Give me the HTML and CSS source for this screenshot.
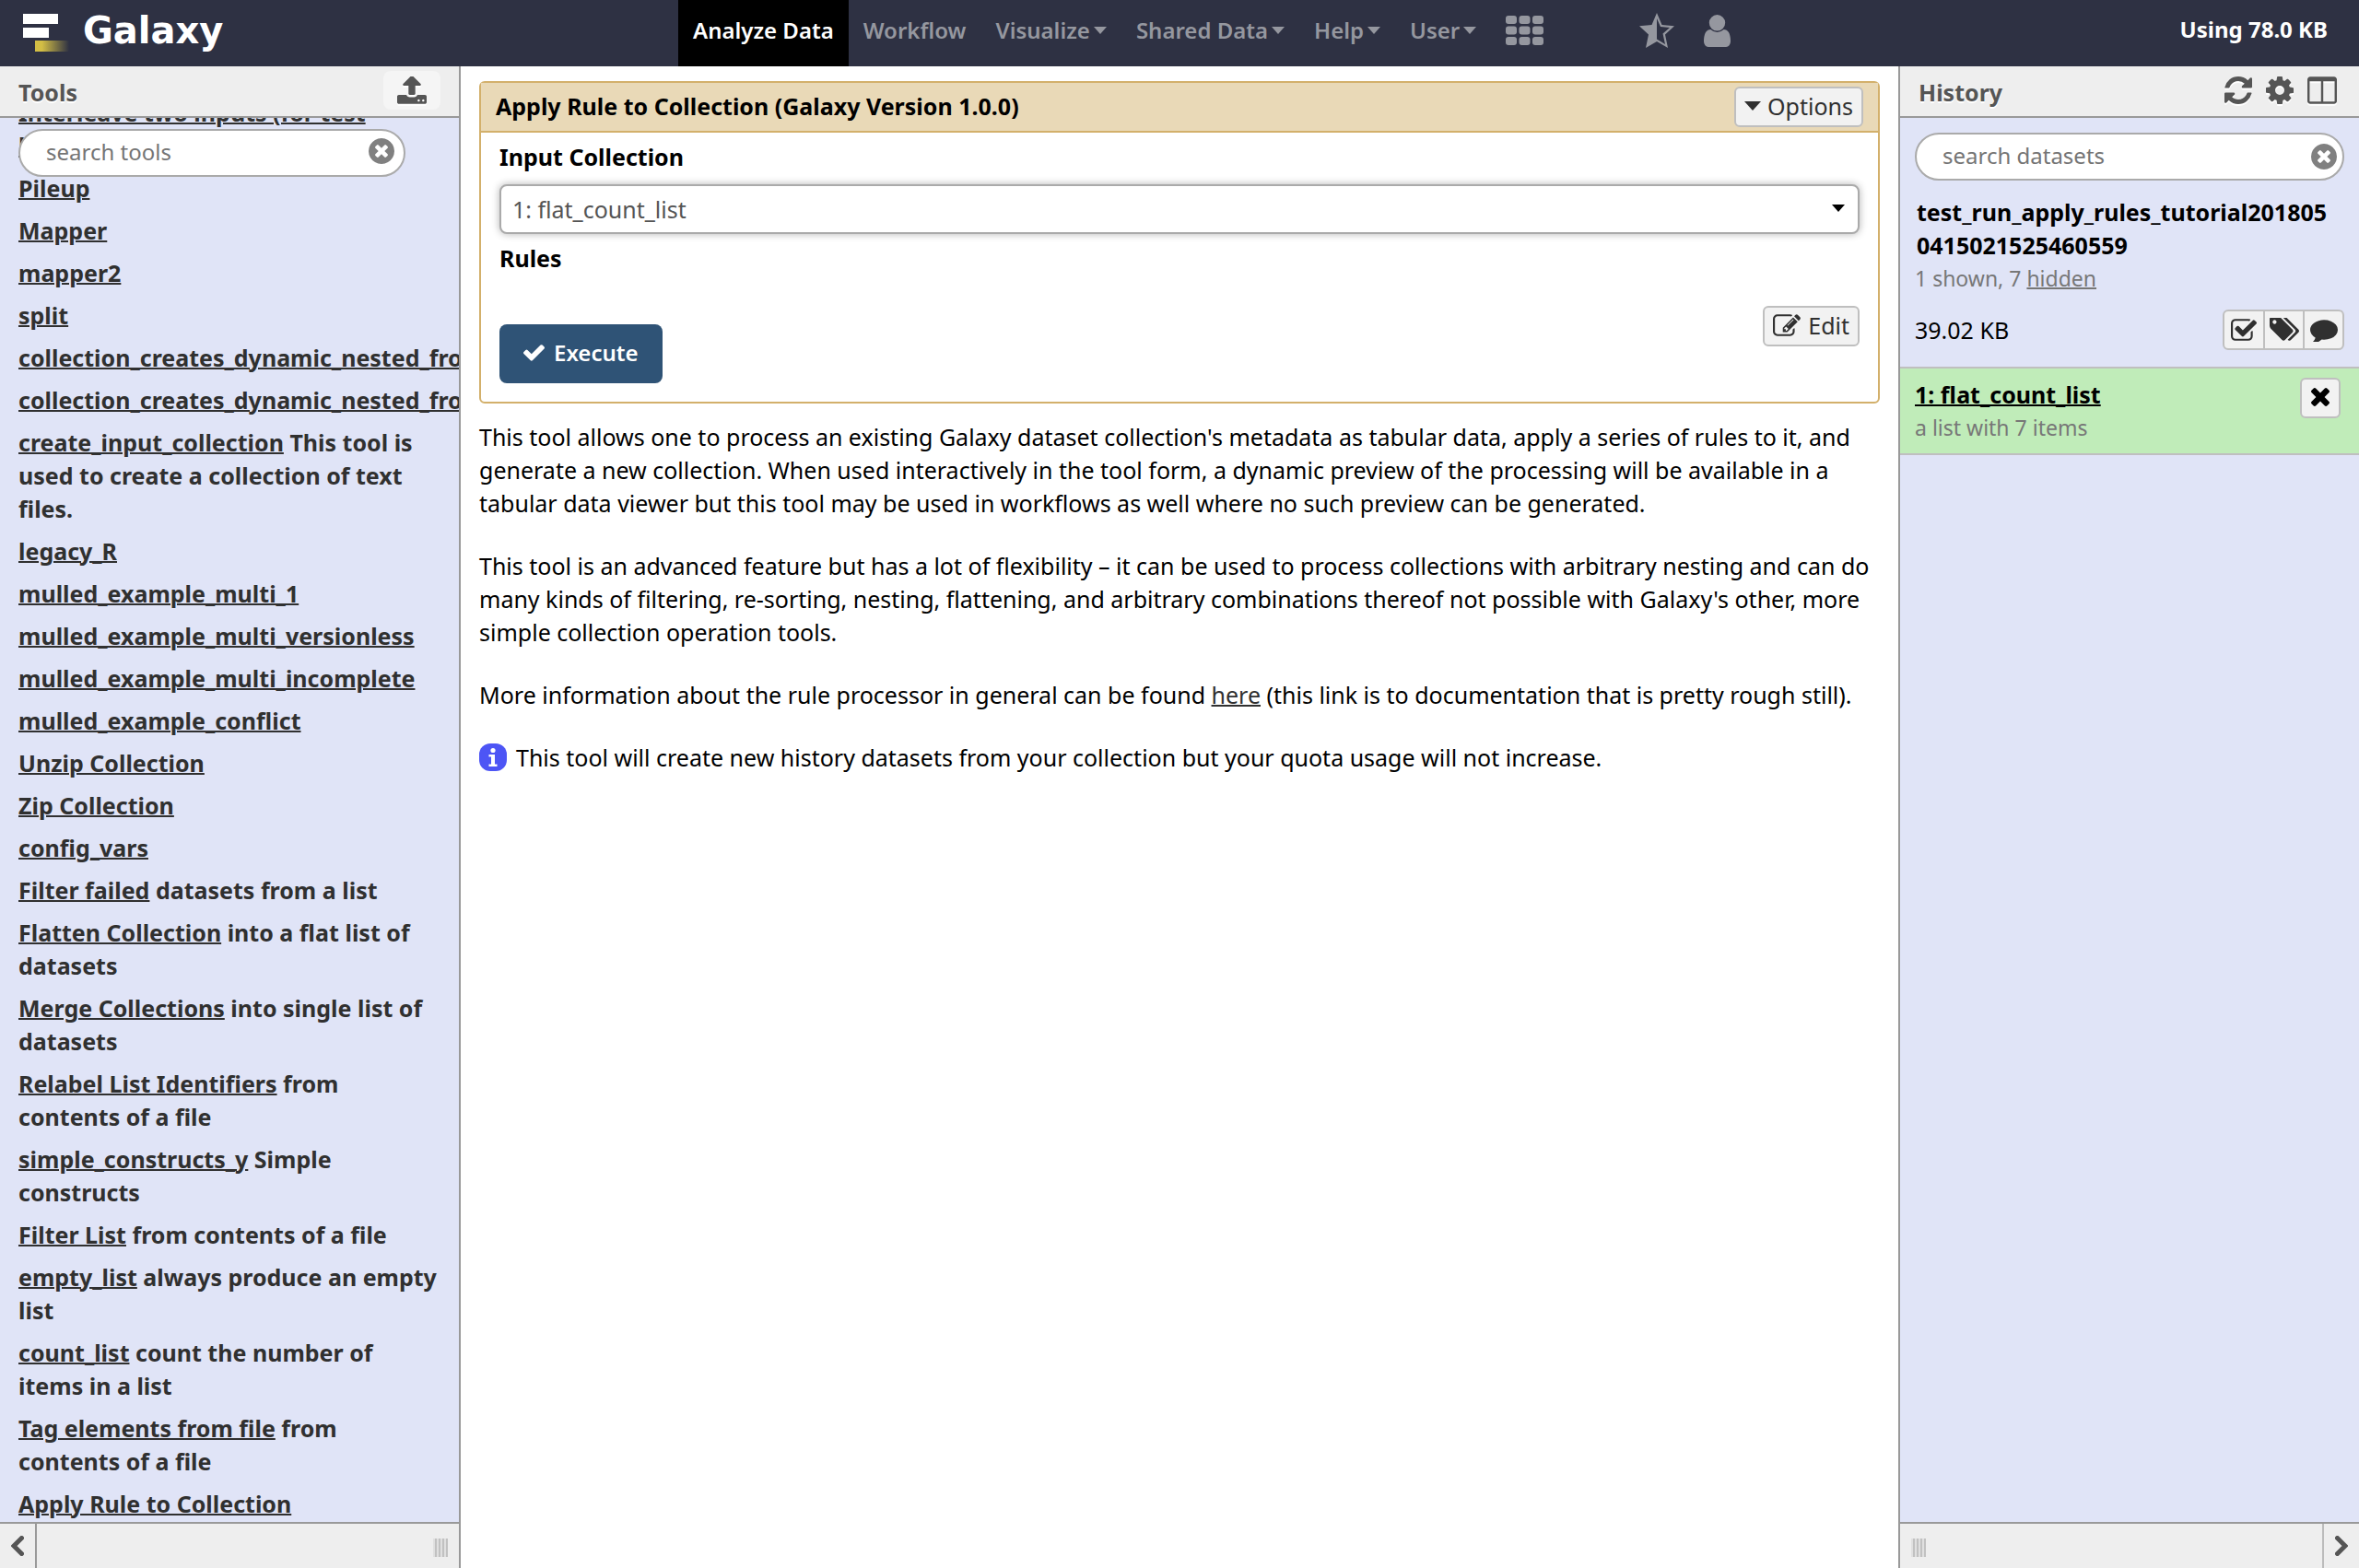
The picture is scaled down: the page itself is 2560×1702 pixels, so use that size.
FILE: index.html
```html
<!DOCTYPE html>
<html lang="en">
<head>
<meta charset="utf-8">
<title>Galaxy</title>
<link rel="stylesheet" href="styles.css">
</head>
<body>
<svg class="defs" aria-hidden="true">
  <symbol id="times-circle" viewBox="128 128 1536 1536"><path d="M1277 1122q0-26-19-45l-181-181 181-181q19-19 19-45 0-27-19-46l-90-90q-19-19-46-19-26 0-45 19l-181 181-181-181q-19-19-45-19-27 0-46 19l-90 90q-19 19-19 46 0 26 19 45l181 181-181 181q-19 19-19 45 0 27 19 46l90 90q19 19 46 19 26 0 45-19l181-181 181 181q19 19 45 19 27 0 46-19l90-90q19-19 19-46zm387-226q0 209-103 385.500t-279.500 279.500-385.500 103-385.500-103-279.500-279.500-103-385.500 103-385.500 279.500-279.500 385.500-103 385.500 103 279.500 279.500 103 385.500z"/></symbol>
</svg>
<div class="app">
  <header class="masthead">
    <a class="brand" href="#">
      <svg class="logo" viewBox="0 0 52 44" width="52" height="44">
        <defs><linearGradient id="fade"><stop offset="0.2" stop-color="#d3be45"/><stop offset="1" stop-color="#d3be45" stop-opacity="0"/></linearGradient></defs>
        <rect x="1" y="1" width="38" height="11" fill="#fff"/>
        <rect x="1" y="16" width="28" height="11" fill="#fff"/>
        <rect x="14" y="30" width="37" height="12" fill="url(#fade)"/>
      </svg>
      <span class="brand-name">Galaxy</span>
    </a>
    <nav class="menu">
      <a class="menu-item active" href="#">Analyze Data</a>
      <a class="menu-item" href="#">Workflow</a>
      <a class="menu-item has-caret" href="#">Visualize</a>
      <a class="menu-item has-caret" href="#">Shared Data</a>
      <a class="menu-item has-caret" href="#">Help</a>
      <a class="menu-item has-caret" href="#">User</a>
      <a class="menu-item" href="#" aria-label="Apps">
        <svg viewBox="0 0 41 32" width="41" height="32"><rect width="12" height="9" rx="3"/><rect x="14.500" width="12" height="9" rx="3"/><rect x="29" width="12" height="9" rx="3"/><rect y="11.500" width="12" height="9" rx="3"/><rect x="14.500" y="11.500" width="12" height="9" rx="3"/><rect x="29" y="11.500" width="12" height="9" rx="3"/><rect y="23" width="12" height="9" rx="3"/><rect x="14.500" y="23" width="12" height="9" rx="3"/><rect x="29" y="23" width="12" height="9" rx="3"/></svg>
      </a>
      <a class="menu-item shortcuts" href="#" aria-label="Favorites">
        <svg viewBox="0 0 38 38" width="38" height="38"><path d="M19 0L24.500 13 38 14.300 28 23.500 31 38 19 31 7 38 10 23.500 0 14.300 13.500 13zM19 6V28.500L28 34 25.500 22.500 33 16 23 15z" fill-rule="evenodd"/></svg>
      </a>
      <a class="menu-item" href="#" aria-label="Account">
        <svg viewBox="256 128 1280 1536" width="29" height="35"><path d="M1536 1399q0 109-62.500 187t-150.500 78h-854q-88 0-150.500-78t-62.500-187q0-85 8.500-160.500t31.500-152 58.500-131 94-89 134.500-34.500q131 128 313 128t313-128q76 0 134.500 34.500t94 89 58.500 131 31.500 152 8.500 160.500zm-256-887q0 159-112.500 271.500t-271.500 112.500-271.500-112.500-112.500-271.500 112.500-271.500 271.500-112.500 271.500 112.500 112.500 271.500z"/></svg>
      </a>
    </nav>
    <div class="quota">Using 78.0 KB</div>
  </header>

  <aside class="panel panel-left">
    <div class="panel-header">
      <h2>Tools</h2>
      <button class="upload" aria-label="Upload">
        <svg viewBox="64 128 1664 1536" width="32" height="30"><path d="M1344 1472q0-26-19-45t-45-19-45 19-19 45 19 45 45 19 45-19 19-45zm256 0q0-26-19-45t-45-19-45 19-19 45 19 45 45 19 45-19 19-45zm128-224v320q0 40-28 68t-68 28h-1472q-40 0-68-28t-28-68v-320q0-40 28-68t68-28h427q21 56 70.500 92t110.500 36h256q61 0 110.500-36t70.500-92h427q40 0 68 28t28 68zm-325-648q-17 40-59 40h-256v448q0 26-19 45t-45 19h-256q-26 0-45-19t-19-45v-448h-256q-42 0-59-40-17-39 14-69l448-448q18-19 45-19t45 19l448 448q31 30 14 69z"/></svg>
      </button>
    </div>
    <div class="tools">
      <ul class="tool-list">
        <li><a href="#">Interleave two inputs (for test libraries)</a></li>
        <li><a href="#">Pileup</a></li>
        <li><a href="#">Mapper</a></li>
        <li><a href="#">mapper2</a></li>
        <li><a href="#">split</a></li>
        <li><a href="#">collection_creates_dynamic_nested_from</a></li>
        <li><a href="#">collection_creates_dynamic_nested_from</a></li>
        <li><a href="#">create_input_collection</a> This tool is used to create a collection of text files.</li>
        <li><a href="#">legacy_R</a></li>
        <li><a href="#">mulled_example_multi_1</a></li>
        <li><a href="#">mulled_example_multi_versionless</a></li>
        <li><a href="#">mulled_example_multi_incomplete</a></li>
        <li><a href="#">mulled_example_conflict</a></li>
        <li><a href="#">Unzip Collection</a></li>
        <li><a href="#">Zip Collection</a></li>
        <li><a href="#">config_vars</a></li>
        <li><a href="#">Filter failed</a> datasets from a list</li>
        <li><a href="#">Flatten Collection</a> into a flat list of datasets</li>
        <li><a href="#">Merge Collections</a> into single list of datasets</li>
        <li><a href="#">Relabel List Identifiers</a> from contents of a file</li>
        <li><a href="#">simple_constructs_y</a> Simple constructs</li>
        <li><a href="#">Filter List</a> from contents of a file</li>
        <li><a href="#">empty_list</a> always produce an empty list</li>
        <li><a href="#">count_list</a> count the number of items in a list</li>
        <li><a href="#">Tag elements from file</a> from contents of a file</li>
        <li><a href="#">Apply Rule to Collection</a></li>
      </ul>
      <div class="search tool-search">
        <input type="text" placeholder="search tools" aria-label="search tools">
        <button class="clear" aria-label="Clear search"><svg width="28" height="28"><use href="#times-circle"/></svg></button>
      </div>
    </div>
    <div class="panel-footer">
      <button class="collapse" aria-label="Collapse tools"><svg viewBox="0 0 14 22" width="14" height="22"><path d="M11.500 2.500L3 11l8.500 8.500" /></svg></button>
      <span class="grip"></span>
    </div>
  </aside>

  <main class="center">
    <section class="card">
      <div class="card-header">
        <h1>Apply Rule to Collection (Galaxy Version 1.0.0)</h1>
        <button class="btn options"><svg viewBox="0 0 18 10" width="18" height="10"><path d="M0 0H18L9 10z"/></svg>Options</button>
      </div>
      <div class="card-body">
        <label class="field-label" for="input-collection">Input Collection</label>
        <div class="select-wrap">
          <select id="input-collection"><option>1: flat_count_list</option></select>
          <svg class="select-caret" viewBox="0 0 14 8" width="14" height="8"><path d="M0 0H14L7 8z"/></svg>
        </div>
        <div class="field-label rules-label">Rules</div>
        <div class="actions">
          <button class="execute"><svg viewBox="121 338 1550 1188" width="23" height="18"><path d="M1671 566q0 40-28 68l-724 724-136 136q-28 28-68 28t-68-28l-136-136-362-362q-28-28-28-68t28-68l136-136q28-28 68-28t68 28l294 295 656-657q28-28 68-28t68 28l136 136q28 28 28 68z"/></svg>Execute</button>
          <button class="btn edit"><svg viewBox="0 128 1792 1408" width="30" height="24"><path d="M888 1184l116-116-152-152-116 116v56h96v96h56zm440-720q-16-16-33 1l-350 350q-17 17-1 33t33-1l350-350q17-17 1-33zm80 594v190q0 119-84.500 203.500t-203.500 84.500h-832q-119 0-203.500-84.500t-84.500-203.500v-832q0-119 84.500-203.500t203.500-84.500h832q63 0 117 25 15 7 18 23 3 17-9 29l-49 49q-14 14-32 8-23-6-45-6h-832q-66 0-113 47t-47 113v832q0 66 47 113t113 47h832q66 0 113-47t47-113v-126q0-13 9-22l64-64q15-15 35-7t20 29zm-96-738l288 288-672 672h-288v-288zm444 132l-92 92-288-288 92-92q28-28 68-28t68 28l152 152q28 28 28 68t-28 68z"/></svg>Edit</button>
        </div>
      </div>
    </section>
    <div class="help">
      <p>This tool allows one to process an existing Galaxy dataset collection's metadata as tabular data, apply a series of rules to it, and generate a new collection. When used interactively in the tool form, a dynamic preview of the processing will be available in a tabular data viewer but this tool may be used in workflows as well where no such preview can be generated.</p>
      <p>This tool is an advanced feature but has a lot of flexibility – it can be used to process collections with arbitrary nesting and can do many kinds of filtering, re-sorting, nesting, flattening, and arbitrary combinations thereof not possible with Galaxy's other, more simple collection operation tools.</p>
      <p>More information about the rule processor in general can be found <a href="#">here</a> (this link is to documentation that is pretty rough still).</p>
      <p class="note"><svg viewBox="0 0 30 30" width="30" height="30"><rect width="30" height="30" rx="12" fill="#4d55f5"/><circle cx="15" cy="7.500" r="2.600" fill="#fff"/><path d="M10.500 12H17V22.500H19.500V25H10.500V22.500H13V14.500H10.500z" fill="#fff"/></svg>This tool will create new history datasets from your collection but your quota usage will not increase.</p>
    </div>
  </main>

  <aside class="panel panel-right">
    <div class="panel-header">
      <h2>History</h2>
      <div class="header-icons">
        <a href="#" aria-label="Refresh"><svg viewBox="128 128 1536 1536" width="30" height="30"><path d="M1639 1056q0 5-1 7-64 268-268 434.500t-478 166.500q-146 0-282.500-55t-243.500-157l-129 129q-19 19-45 19t-45-19-19-45v-448q0-26 19-45t45-19h448q26 0 45 19t19 45-19 45l-137 137q71 66 161 102t187 36q134 0 250-65t186-179q11-17 53-117 8-23 30-23h192q13 0 22.500 9.500t9.500 22.500zm25-800v448q0 26-19 45t-45 19h-448q-26 0-45-19t-19-45 19-45l138-138q-148-137-349-137-134 0-250 65t-186 179q-11 17-53 117-8 23-30 23h-199q-13 0-22.500-9.500t-9.500-22.500v-7q65-268 270-434.500t480-166.500q146 0 284 55.500t245 156.500l130-129q19-19 45-19t45 19 19 45z"/></svg></a>
        <a href="#" aria-label="History options"><svg viewBox="128 128 1536 1536" width="30" height="30"><path d="M1152 896q0-106-75-181t-181-75-181 75-75 181 75 181 181 75 181-75 75-181zm512-109v222q0 12-8 23t-20 13l-185 28q-19 54-39 91 35 50 107 138 10 12 10 25t-9 23q-27 37-99 108t-94 71q-12 0-26-9l-138-108q-44 23-91 38-16 136-29 186-7 28-36 28h-222q-14 0-24.500-8.500t-11.500-21.500l-28-184q-49-16-90-37l-141 107q-10 9-25 9-14 0-25-11-126-114-165-168-7-10-7-23 0-12 8-23 15-21 51-66.500t54-70.500q-27-50-41-99l-183-27q-13-2-21-12.500t-8-23.500v-222q0-12 8-23t19-13l186-28q14-46 39-92-40-57-107-138-10-12-10-24 0-10 9-23 26-36 98.500-107.500t94.500-71.500q13 0 26 10l138 107q44-23 91-38 16-136 29-186 7-28 36-28h222q14 0 24.500 8.500t11.500 21.500l28 184q49 16 90 37l142-107q9-9 24-9 13 0 25 10 129 119 165 170 7 8 7 22 0 12-8 23-15 21-51 66.500t-54 70.500q26 50 41 98l183 28q13 2 21 12.500t8 23.500z"/></svg></a>
        <a href="#" aria-label="View all histories"><svg viewBox="64 128 1664 1536" width="32" height="30"><path d="M224 1536h608v-1152h-640v1120q0 13 9.500 22.500t22.500 9.500zm1376-32v-1120h-640v1152h608q13 0 22.500-9.500t9.500-22.500zm128-1216v1216q0 66-47 113t-113 47h-1344q-66 0-113-47t-47-113v-1216q0-66 47-113t113-47h1344q66 0 113 47t47 113z"/></svg></a>
      </div>
    </div>
    <div class="history">
      <div class="history-top">
        <div class="search">
          <input type="text" placeholder="search datasets" aria-label="search datasets">
          <button class="clear" aria-label="Clear search"><svg width="28" height="28"><use href="#times-circle"/></svg></button>
        </div>
        <div class="history-name">test_run_apply_rules_tutorial2018050415021525460559</div>
        <div class="muted">1 shown, 7 <a href="#">hidden</a></div>
        <div class="history-size">
          <span>39.02 KB</span>
          <div class="btn-group">
            <button aria-label="Select datasets"><svg viewBox="64 128 1664 1408" width="28" height="24"><path d="M1472 930v318q0 119-84.500 203.500t-203.500 84.500h-832q-119 0-203.500-84.500t-84.500-203.500v-832q0-119 84.500-203.500t203.500-84.500h832q63 0 117 25 15 7 18 23 3 17-9 29l-49 49q-10 10-23 10-3 0-9-2-23-6-45-6h-832q-66 0-113 47t-47 113v832q0 66 47 113t113 47h832q66 0 113-47t47-113v-254q0-13 9-22l64-64q10-10 23-10 6 0 12 3 20 8 20 29zm231-489l-814 814q-24 24-57 24t-57-24l-430-430q-24-24-24-57t24-57l110-110q24-24 57-24t57 24l263 263 647-647q24-24 57-24t57 24l110 110q24 24 24 57t-24 57z"/></svg></button>
            <button aria-label="Edit tags"><svg viewBox="128 192 1900 1520" width="32" height="26"><path d="M576 448q0-53-37.500-90.500t-90.500-37.500-90.500 37.500-37.500 90.500 37.500 90.500 90.500 37.500 90.500-37.500 37.500-90.500zm1067 576q0 53-37 90l-491 492q-39 37-91 37-53 0-90-37l-715-716q-38-37-64.500-101t-26.500-117v-416q0-52 38-90t90-38h416q53 0 117 26.500t102 64.500l715 714q37 39 37 91zm384 0q0 53-37 90l-491 492q-39 37-91 37-36 0-59-14t-53-45l470-470q37-37 37-90 0-52-37-91l-715-714q-38-38-102-64.500t-117-26.500h224q53 0 117 26.500t102 64.500l715 714q37 39 37 91z"/></svg></button>
            <button aria-label="Edit annotation"><svg viewBox="0 128 1792 1536" width="30" height="26"><path d="M1792 896q0 174-120 321.500t-326 233-450 85.500q-70 0-145-8-198 175-460 242-49 14-114 22-17 2-30.500-9t-17.500-29v-1q-3-4-.5-12t2-10 4.500-9.500l6-9 7-8.500 8-9q7-8 31-34.500t34.500-38 31-39.500 32.500-51 27-59 26-76q-157-89-247.500-220t-90.500-281q0-130 71-248.500t191-204.500 286-136.500 348-50.500q244 0 450 85.500t326 233 120 321.500z"/></svg></button>
          </div>
        </div>
      </div>
      <div class="dataset">
        <div>
          <a class="dataset-name" href="#">1: flat_count_list</a>
          <div class="muted">a list with 7 items</div>
        </div>
        <button class="btn delete" aria-label="Delete"><svg viewBox="302 302 1188 1188" width="20" height="20"><path d="M1490 1322q0 40-28 68l-136 136q-28 28-68 28t-68-28l-294-294-294 294q-28 28-68 28t-68-28l-136-136q-28-28-28-68t28-68l294-294-294-294q-28-28-28-68t28-68l136-136q28-28 68-28t68 28l294 294 294-294q28-28 68-28t68 28l136 136q28 28 28 68t-28 68l-294 294 294 294q28 28 28 68z" transform="translate(0 -64)"/></svg></button>
      </div>
    </div>
    <div class="panel-footer">
      <span class="grip"></span>
      <button class="collapse" aria-label="Collapse history"><svg viewBox="0 0 14 22" width="14" height="22"><path d="M2.500 2.500L11 11l-8.500 8.500"/></svg></button>
    </div>
  </aside>
</div>
</body>
</html>
```
FILE: styles.css
```css
* { box-sizing: border-box; }

body {
  margin: 0;
  font: 25px/36px "Noto Sans", "Lucida Grande", sans-serif;
  color: #000;
  background: #fff;
}

h1, h2, p, ul { margin: 0; padding: 0; }
h1, h2 { font-size: 25px; font-weight: 700; }
button, input, select { font: inherit; color: inherit; margin: 0; padding: 0; }
button { border: 0; background: none; display: flex; align-items: center; justify-content: center; }
a { color: inherit; text-decoration-thickness: 2px; }
svg { display: block; fill: currentColor; flex: none; }
.defs { position: absolute; width: 0; height: 0; }

.app {
  display: grid;
  grid-template: 72px minmax(0, 1fr) / 500px minmax(0, 1fr) 500px;
  height: 100vh;
}

/* Masthead */
.masthead {
  grid-column: 1 / -1;
  display: grid;
  grid-template-columns: 736px 1fr auto;
  background: #2e3143;
  color: #fff;
  font-size: 24px;
  font-weight: 600;
}
.masthead a { text-decoration: none; }
.brand { display: flex; align-items: flex-start; gap: 14px; padding: 14px 24px; }
.brand-name { font: 700 40px/38px "DejaVu Sans", Verdana, sans-serif; }
.menu { display: flex; }
.menu-item {
  display: flex;
  align-items: center;
  padding: 0 16px 6px;
  color: #95979f;
}
.menu-item.active { background: #000; color: #fff; }
.has-caret::after {
  content: "";
  margin-left: 4px;
  border: solid transparent;
  border-width: 8px 7px 0;
  border-top-color: currentColor;
}
.shortcuts { margin-left: 72px; }
.quota { padding: 14px 34px 0; font-weight: 700; }

/* Side panels */
.panel { display: flex; flex-direction: column; min-height: 0; background: #e0e4f7; }
.panel-left { border-right: 2px solid #999; }
.panel-right { border-left: 2px solid #999; }
.panel-header {
  display: flex;
  align-items: center;
  justify-content: space-between;
  flex: none;
  height: 56px;
  padding: 0 20px 2px;
  border-bottom: 2px solid #999;
  background: #eee;
  color: #555;
  text-shadow: 0 2px 0 #fff;
}
.panel-header h2 { padding-top: 4px; }
.panel-header svg { filter: drop-shadow(0 2px 0 #fff); }
.upload { width: 62px; height: 42px; border-radius: 8px; background: #f5f5f5; }
.panel-right .panel-header { padding-right: 24px; }
.header-icons { display: flex; gap: 15px; }

.panel-footer {
  display: flex;
  align-items: center;
  justify-content: space-between;
  flex: none;
  height: 50px;
  border-top: 2px solid #999;
  background: #eee;
}
.collapse { width: 40px; height: 100%; color: #555; }
.collapse path { fill: none; stroke: currentColor; stroke-width: 5; stroke-linecap: round; }
.panel-left .collapse { border-right: 2px solid #999; }
.panel-right .collapse { border-left: 2px solid #bbb; }
.grip {
  width: 16px;
  height: 20px;
  margin: 4px 12px 0;
  background: repeating-linear-gradient(90deg, #e0e0e0 0 2px, #c1c1c1 2px 4px);
}

.search { position: relative; }
.search input {
  display: block;
  width: 100%;
  height: 52px;
  padding: 0 60px 4px 28px;
  border: 2px solid #aaa;
  border-radius: 26px;
  background: #fff;
  font-size: 24px;
}
.search input::placeholder { color: #757575; opacity: 1; }
.clear { position: absolute; right: 8px; top: 12px; color: #808080; }

.tools {
  position: relative;
  display: flex;
  flex-direction: column;
  justify-content: flex-end;
  flex: 1;
  min-height: 0;
  overflow: hidden;
}
.tool-list {
  display: flex;
  flex-direction: column;
  gap: 10px;
  padding: 0 20px 2px;
  list-style: none;
  color: #303030;
  font-weight: 700;
}
.tool-search { position: absolute; top: 12px; left: 20px; right: 58px; }
.tool-search .clear { right: 12px; top: 10px; }

/* Tool form */
.center { padding: 16px 20px; }
.card { border: 2px solid #d3b06b; border-radius: 6px; }
.card-header {
  display: flex;
  align-items: center;
  justify-content: space-between;
  height: 54px;
  padding: 0 16px;
  border-bottom: 2px solid #d3b06b;
  background: #e9d9b7;
}
.card-header h1 { padding-bottom: 3px; }
.btn {
  height: 44px;
  padding-bottom: 2px;
  border: 2px solid #bfbfbf;
  border-radius: 6px;
  background: #f2f2f2;
  color: #303030;
}
.options { gap: 7px; padding: 0 9px 2px; }
.card-body { padding: 8px 20px 20px; }
.field-label { display: block; font-weight: 700; }
.select-wrap { position: relative; margin: 12px 0 8px; }
.select-wrap select {
  display: block;
  width: 100%;
  height: 54px;
  padding: 0 40px 0 12px;
  appearance: none;
  border: 2px solid #aaa;
  border-radius: 8px;
  background: #fff;
  color: #555;
  font-size: 25px;
  box-shadow: 0 0 8px rgba(0, 0, 0, 0.3);
}
.select-caret { position: absolute; right: 16px; top: 22px; pointer-events: none; }
.actions {
  display: flex;
  align-items: flex-start;
  justify-content: space-between;
  margin-top: 34px;
}
.execute {
  gap: 10px;
  height: 64px;
  margin-top: 20px;
  padding: 0 26px 2px;
  border-radius: 8px;
  background: #2f5376;
  color: #fff;
  font-size: 24px;
  font-weight: 600;
}
.edit { gap: 8px; padding: 0 9px 2px; }

.help { display: flex; flex-direction: column; gap: 32px; padding-top: 18px; }
.help a { color: #303030; }
.note { display: flex; align-items: center; gap: 10px; }

/* History */
.history { flex: 1; min-height: 0; overflow: hidden; }
.history-top { padding: 16px 16px 18px; }
.history-name { padding: 16px 10px 0 2px; font-weight: 700; word-break: break-all; }
.muted { color: #777; font-size: 23px; }
.history-size { display: flex; align-items: center; justify-content: space-between; margin-top: 16px; }
.btn-group {
  display: flex;
  height: 44px;
  border: 2px solid #bfbfbf;
  border-radius: 6px;
  background: #f2f2f2;
  color: #303030;
}
.btn-group button { width: 42px; }
.btn-group button + button { width: 43px; border-left: 2px solid #bfbfbf; }
.dataset {
  display: flex;
  align-items: flex-start;
  justify-content: space-between;
  padding: 10px 20px 10px 16px;
  border: solid #bfbfbf;
  border-width: 2px 0;
  background: #c0ecb9;
}
.dataset-name { font-weight: 700; }
.delete { width: 44px; color: #000; }
```
